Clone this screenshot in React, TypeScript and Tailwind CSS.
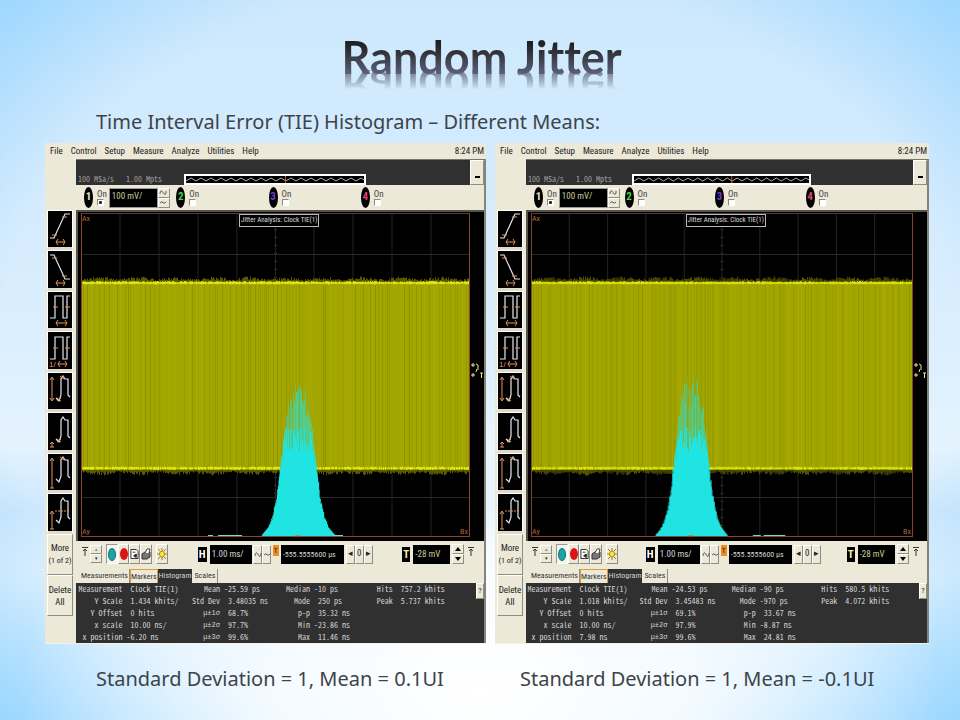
import React from "react";

interface Scope {
  name: string;
  center: number;
  seed: number;
  peak: number;
  caption: string;
  rows: [string, string, string, string, string, string, string, string][];
  specks: [number, number][];
}

const scopes: Scope[] = [
  {
    name: "left",
    center: 217,
    seed: 7,
    peak: 156,
    caption: "Standard Deviation = 1, Mean = 0.1UI",
    rows: [
      ["Measurement", " Clock TIE(1)", "Mean", "-25.59 ps", "Median", "-10 ps", "Hits", " 757.2 khits"],
      ["Y Scale", " 1.434 khits/", "Std Dev", " 3.48035 ns", "Mode", " 250 ps", "Peak", " 5.737 khits"],
      ["Y Offset", " 0 hits", "μ±1σ", " 68.7%", "p-p", " 35.32 ns", "", ""],
      ["x scale", " 10.00 ns/", "μ±2σ", " 97.7%", "Min", "-23.86 ns", "", ""],
      ["x position", "-6.20 ns", "μ±3σ", " 99.6%", "Max", " 11.46 ns", "", ""],
    ],
    specks: [[127, 5], [137, 24], [252, 10]],
  },
  {
    name: "right",
    center: 163,
    seed: 23,
    peak: 162,
    caption: "Standard Deviation = 1, Mean = -0.1UI",
    rows: [
      ["Measurement", " Clock TIE(1)", "Mean", "-24.53 ps", "Median", "-90 ps", "Hits", " 580.5 khits"],
      ["Y Scale", " 1.018 khits/", "Std Dev", " 3.45483 ns", "Mode", "-970 ps", "Peak", " 4.072 khits"],
      ["Y Offset", " 0 hits", "μ±1σ", " 69.1%", "p-p", " 33.67 ns", "", ""],
      ["x scale", " 10.00 ns/", "μ±2σ", " 97.9%", "Min", "-8.87 ns", "", ""],
      ["x position", " 7.98 ns", "μ±3σ", " 99.6%", "Max", " 24.81 ns", "", ""],
    ],
    specks: [[226, 8], [237, 22]],
  },
];

const envelope: Array<[number, number]> = [
  [0, 1], [5, 0.98], [8, 0.93], [11, 0.84], [14, 0.68], [18, 0.46], [22, 0.25], [26, 0.13], [30, 0.06], [36, 0.01],
];

function envelopeAt(d: number) {
  for (let i = 1; i < envelope.length; i++) {
    const [x0, y0] = envelope[i - 1];
    const [x1, y1] = envelope[i];
    if (d <= x1) return y0 + ((y1 - y0) * (d - x0)) / (x1 - x0);
  }
  return 0;
}

function random(seed: number) {
  let s = seed * 9301 + 49297;
  return () => {
    s = (s * 1103515245 + 12345) % 2147483648;
    return s / 2147483648;
  };
}

function Plot({ scope }: { scope: Scope }) {
  const next = random(scope.seed);
  const W = 389;
  const H = 324;
  let fuzz = "";
  let bright = "";
  for (let x = 0; x < W; x++) {
    const swell = 2 + 2 * Math.abs(Math.sin(x / 12));
    fuzz += `M${x + 0.5} ${70 - 1 - swell * (0.4 + next())}V70M${x + 0.5} 256V${257 + swell * (0.4 + next())}`;
    if (next() > 0.25) bright += `M${x + 0.5} ${69 - next()}V${70.5 + next()}M${x + 0.5} ${253.5 + next()}V${256 + next()}`;
  }
  const stripes: React.ReactNode[] = [];
  for (let x = 2; x < W; x += 2 + Math.floor(next() * 4)) {
    stripes.push(
      <path key={x} d={`M${x + 0.5} 72V254`} stroke={next() > 0.3 ? "#6e7000" : "#b9bb0a"} strokeOpacity={0.08 + next() * 0.28} />
    );
  }
  let core = "";
  const veil: React.ReactNode[] = [];
  for (let i = -37; i <= 37; i++) {
    const top = scope.peak * envelopeAt(Math.abs(i));
    const solid = Math.min(top * (0.82 + next() * 0.16), 84 + next() * 26);
    const x = scope.center + i + 0.5;
    core += `M${x} ${H - 1}V${H - 1 - solid}`;
    if (top > solid) {
      veil.push(
        <path key={i} d={`M${x} ${H - 1 - solid}V${H - 1 - solid - (top - solid) * (0.55 + next() * 0.5)}`} stroke="#35dcc0" strokeOpacity={0.35 + next() * 0.55} />
      );
    }
  }
  return (
    <svg className="block size-full" viewBox={`0 0 ${W} ${H}`} preserveAspectRatio="none" fill="none" aria-hidden="true">
      {[39, 78, 117, 156, 233, 272, 311, 350].map((x) => (
        <path key={x} d={`M${x} 0V${H}`} stroke="#232323" />
      ))}
      <path d="M0 41.5H389M0 284.5H389" stroke="#292929" />
      <path d={`M194.5 0V${H}`} stroke="#333" strokeDasharray="1 7" strokeWidth="3" />
      <path d="M194.5 0V324" stroke="#222" />
      <path d="M0 .5H389" stroke="#4a4038" />
      <path d={fuzz} stroke="#555900" />
      <path d="M0 70H389V256H0Z" fill="#a3a500" />
      {stripes}
      <path d="M0 70H389M0 255.5H389" stroke="#c7cb08" strokeWidth="2" />
      <path d={bright} stroke="#e0e612" />
      <path d="M0 323.5H389M.5 0V324M388.5 0V324" stroke="#86452f" strokeWidth="1" />
      {veil}
      <path d={core} stroke="#20e4e2" strokeWidth="1.3" />
      {scope.specks.map(([x, w]) => (
        <path key={x} d={`M${x} 322.5h${w}`} stroke="#7fd8c4" />
      ))}
      <path d={`M${scope.center - 3} 322.5h5`} stroke="#c48b35" />
    </svg>
  );
}

const pulse = "M2 26H7V4H15V26H19V4H22";
const step = "M8 25L11 28L13 22V6L15 3L17 6H20V22L22 24";
const toolIcons: { label: string; white: string; orange: string; note?: string; dashed?: string }[] = [
  { label: "Rise time", white: "M2 27H6L17 3H22", orange: "M4 24h5M14 6h5M8 31h9M10 28l-2 3 2 3M15 28l2 3-2 3" },
  { label: "Fall time", white: "M2 3H6L17 27H22", orange: "M4 6h5M14 24h5M8 31h9M10 28l-2 3 2 3M15 28l2 3-2 3" },
  { label: "Period", white: pulse, orange: "M5 15h5M17 15h5M8 31h11M10 28l-2 3 2 3M17 28l2 3-2 3" },
  { label: "Frequency", white: pulse, orange: "M5 15h5M17 15h5M10 31h9M12 28l-2 3 2 3M17 28l2 3-2 3", note: "1/" },
  { label: "V peak-peak", white: step, orange: "M4 5V27M2 7l2-3 2 3M2 25l2 3 2-3M12 3l4 3M12 6l4-3M9 25l4 3M9 28l4-3" },
  { label: "V minimum", white: step, orange: "M4 28V33M2 30l2-2 2 2M2 33h4M9 25l4 3M9 28l4-3" },
  { label: "V maximum", white: step, orange: "M4 5V34M2 7l2-3 2 3M2 34h4M12 3l4 3M12 6l4-3" },
  { label: "V average", white: step, orange: "M4 17V34M2 19l2-3 2 3M2 34h4", dashed: "M7 16H22" },
];

const bevel = "border border-t-white border-l-white border-r-[#8f8c80] border-b-[#8f8c80] bg-[#ece9d8]";
const narrow = "font-['Liberation_Sans_Narrow','Roboto_Condensed','Noto_Sans_CJK_SC',sans-serif]";

function Sidebar() {
  return (
    <aside className="flex w-[31px] shrink-0 flex-col pt-[51px] pl-[2px] pr-[3px]">
      {toolIcons.map((t, i) => (
        <button key={t.label} aria-label={t.label} className={`${i % 2 ? "h-[41px]" : "h-[40px]"} border-t border-r border-l border-white border-b-3 border-b-[#dedbca] bg-black`}>
          <svg className="block h-[36px] w-[24px]" viewBox="0 0 24 36" fill="none" aria-hidden="true">
            <path d={t.white} stroke="#e4e8ee" strokeWidth="1.2" />
            <path d={t.orange} stroke="#e8935a" />
            {t.dashed && <path d={t.dashed} stroke="#e8935a" strokeDasharray="2 1" />}
            {t.note && <text x="1" y="34" fontSize="8" fontFamily="Liberation Sans" fill="#e8935a">{t.note}</text>}
          </svg>
        </button>
      ))}
      <button className={`${bevel} h-[41px] text-[9px] leading-[12px] text-[#222]`}>More<br /><span className="whitespace-nowrap text-[8px]">(1 of 2)</span></button>
      <button className={`${bevel} h-[41px] text-[9px] leading-[12px] text-[#222]`}>Delete<br />All</button>
    </aside>
  );
}

const channels = [
  { n: "1", color: "text-[#e8e8c0]" },
  { n: "2", color: "text-[#49d34e]" },
  { n: "3", color: "text-[#6b3fd0]" },
  { n: "4", color: "text-[#e0407c]" },
];

function Wave({ soft = false }: { soft?: boolean }) {
  return (
    <svg className="block h-[7px] w-[8px]" viewBox="0 0 8 7" fill="none" stroke="#555" aria-hidden="true">
      <path d={soft ? "M1 4Q2.500 2 4 3.500T7 3" : "M1 5V4Q2 0 4 3.500T7 4V2"} />
    </svg>
  );
}

function Trigger() {
  return (
    <svg className="mb-1 block h-[10px] w-[6px]" viewBox="0 0 6 10" fill="none" stroke="#333" aria-hidden="true">
      <path d="M0 .5H6M3 9V2M1 4L3 2L5 4" />
    </svg>
  );
}

function ScopePanel({ scope }: { scope: Scope }) {
  return (
    <section className={`${narrow} flex flex-col bg-[#ece9d8] text-[#222]`} aria-label={`${scope.name} oscilloscope`}>
      <nav className="flex h-4 items-center gap-2 pr-[2px] pl-[5px] text-[9px] leading-4 text-[#222]">
        {["File", "Control", "Setup", "Measure", "Analyze", "Utilities", "Help"].map((m) => (
          <button key={m}>{m}</button>
        ))}
        <time className="ml-auto">8:24 PM</time>
      </nav>
      <div className="flex">
        <Sidebar />
        <div className="flex min-w-0 flex-1 flex-col border-t border-r-2 border-t-[#77756c] border-r-[#85837a]">
          <div className="flex h-[25px] bg-[#303030]">
            <div className="grid flex-1 grid-cols-[108fr_182fr_104fr] items-end">
              <p className="mb-[1px] whitespace-pre pl-[2px] font-['Noto_Sans_Mono_CJK_SC','Liberation_Mono',monospace] text-[8px] leading-[10px] text-[#a2a2a2]">100 MSa/s   1.00 Mpts</p>
              <div className="h-[11px] border-2 border-white bg-black">
                <svg className="block h-[7px] w-full" viewBox="0 0 178 7" preserveAspectRatio="none" fill="none" aria-hidden="true">
                  <path d={"M0 5" + Array.from({ length: 18 }, () => "l5 -3l5 3").join("")} stroke="#b0b0b0" />
                  <path d="M99.500 0V7" stroke="#c9572c" />
                </svg>
              </div>
            </div>
            <button aria-label="Minimize" className={`${bevel} flex w-[14px] items-center justify-center pt-2`}><span className="h-[2px] w-[5px] bg-black" /></button>
          </div>
          <div className="grid h-[25px] grid-cols-4 bg-[#ece9d8] pr-[31px] pl-2">
            {channels.map((c, i) => (
              <div key={c.n} className="flex items-center gap-1">
                <span className={`${c.color} flex h-[21px] w-[9px] items-center justify-center rounded-[50%] bg-black text-[11px] font-bold`}>{c.n}</span>
                <label className="flex flex-col text-[9px] leading-[10px] text-[#444]">
                  On
                  <input type="checkbox" defaultChecked={i === 0} className="size-[7px] appearance-none border border-t-[#888] border-l-[#888] border-r-white border-b-white bg-white checked:bg-[radial-gradient(circle,#222_35%,#fff_50%)]" />
                </label>
                {i === 0 && (
                  <div className="-ml-[2px] flex">
                    <input aria-label="Vertical scale" readOnly value="100 mV/" className="h-5 w-[49px] border border-[#999] bg-black pl-[2px] pb-1 text-[9px] text-[#c9cc9a]" />
                    <span className="flex flex-col">
                      <button aria-label="Increase scale" className={`${bevel} h-[10px] w-[12px]`}><Wave /></button>
                      <button aria-label="Decrease scale" className={`${bevel} h-[10px] w-[12px]`}><Wave soft /></button>
                    </span>
                  </div>
                )}
              </div>
            ))}
          </div>
          <div className="relative flex h-[331px] border-t-2 border-l-2 border-[#55534c] bg-black pt-[1px] pb-1 pl-[3px] pr-[14px]">
            <Plot scope={scope} />
            <span className="absolute top-[2px] left-1/2 -translate-x-[42px] border border-[#bbb] bg-black px-[1px] text-[7px] leading-[11px] whitespace-nowrap text-[#ddd]">Jitter Analysis: Clock TIE(1)</span>
            <span className="absolute top-[2px] left-1 text-[8px] leading-[10px] text-[#b2603f]">Ax</span>
            <span className="absolute bottom-1 left-1 text-[8px] leading-[10px] text-[#b2603f]">Ay</span>
            <span className="absolute right-[16px] bottom-1 text-[8px] leading-[10px] text-[#b2603f]">Bx</span>
            <svg className="absolute top-[149px] right-[1px] h-[18px] w-[12px]" viewBox="0 0 12 18" fill="none" aria-hidden="true">
              <path d="M0 4h4M2 2v4M0 14h4M2 12v4M5 3l2 1M7 4v5M6 8l-1 3M9 12h3M10.500 12v5" stroke="#e6e68c" />
            </svg>
          </div>
          <div className="grid h-[26px] grid-cols-[116fr_205fr_82fr] items-center bg-[#ece9d8] pl-[6px]">
            <div className="flex items-center">
              <Trigger />
              <span className="mr-1 ml-[2px] flex flex-col">
                <button aria-label="Marker up" className={`${bevel} h-[9px] w-[12px] text-[5px] leading-[7px] text-[#888]`}>▴</button>
                <button aria-label="Marker down" className={`${bevel} h-[9px] w-[12px] text-[5px] leading-[7px]`}>▾</button>
              </span>
              <button aria-label="Run" className="flex h-5 w-[12px] items-center justify-center border border-t-[#999] border-l-[#999] border-r-white border-b-white bg-[#f6f4ea]"><span className="h-[13px] w-[8px] rounded-[50%] border border-[#0a7474] bg-[#1fa5a5]" /></button>
              <button aria-label="Stop" className={`${bevel} flex h-5 w-[11px] items-center justify-center`}><span className="h-[12px] w-[8px] shrink-0 rounded-[50%] bg-[#dd1414]" /></button>
              <button aria-label="Save" className={`${bevel} h-5 w-[11px]`}>
                <svg viewBox="0 0 10 18" fill="none" className="block h-[18px] w-[9px]" aria-hidden="true"><path d="M1 4H7L9 6V14H1Z" fill="#fff" stroke="#222" /><path d="M3 7h3M4 11l3-2v4z" fill="#222" stroke="#222" /></svg>
              </button>
              <button aria-label="Print" className={`${bevel} h-5 w-[12px]`}>
                <svg viewBox="0 0 10 18" fill="none" className="block h-[18px] w-[10px]" aria-hidden="true"><path d="M1 9L4 7H9V12L6 14H1Z" fill="#777" stroke="#333" /><path d="M4 8L6 4H9L8 8" fill="#fff" stroke="#444" /></svg>
              </button>
              <button aria-label="Brightness" className={`${bevel} ml-1 h-5 w-[12px]`}>
                <svg viewBox="0 0 10 18" fill="none" className="block h-[18px] w-[10px]" aria-hidden="true"><path d="M5 3V6M5 12V15M0 9H2M8 9H10M1 4L3 6M9 4L7 6M1 14L3 12M9 14L7 12" stroke="#9a8420" /><ellipse cx="5" cy="9" rx="2.500" ry="3" fill="#ffe83a" stroke="#a58a1d" /></svg>
              </button>
            </div>
            <div className="flex items-center">
              <span className="mr-[3px] h-[15px] w-[9px] bg-black text-center text-[11px] leading-[15px] font-bold text-white">H</span>
              <input aria-label="Time per division" readOnly value="1.00 ms/" className="mr-[1px] h-[19px] w-[42px] bg-black pl-[2px] text-[9px] text-[#d5d5d5]" />
              <button aria-label="Zoom in time" className={`${bevel} h-[19px] w-[9px]`}><Wave /></button>
              <button aria-label="Zoom out time" className={`${bevel} h-[19px] w-[9px]`}><Wave soft /></button>
              <span className="mr-[2px] mb-2 ml-[2px] h-[11px] w-[6px] bg-[#f08a24] text-center text-[8px] leading-[11px]">T</span>
              <input aria-label="Horizontal position" readOnly value="-555.5555600 μs" className="mr-[2px] h-[19px] w-[63px] bg-black pl-[2px] text-[8px] text-[#d5d5d5]" />
              {["◂", "0", "▸"].map((t) => (
                <button key={t} aria-label={t === "0" ? "Zero position" : t === "◂" ? "Move left" : "Move right"} className={`${bevel} h-[19px] w-[9px] text-[9px]`}>{t}</button>
              ))}
            </div>
            <div className="flex items-center">
              <span className="mr-[3px] h-[15px] w-[8px] bg-black text-center text-[11px] leading-[15px] font-bold text-[#f0f0a0]">T</span>
              <input aria-label="Trigger level" readOnly value="-28 mV" className="mr-[2px] h-[19px] w-[37px] bg-black pl-[2px] text-[9px] text-[#c9cc9a]" />
              <span className="mr-1 flex flex-col">
                <button aria-label="Trigger up" className={`${bevel} flex h-[10px] w-[12px] items-center justify-center`}><span className="border-x-3 border-b-4 border-x-transparent border-b-black" /></button>
                <button aria-label="Trigger down" className={`${bevel} flex h-[10px] w-[12px] items-center justify-center`}><span className="border-x-3 border-t-4 border-x-transparent border-t-black" /></button>
              </span>
              <Trigger />
            </div>
          </div>
          <div className="flex h-[16px] items-end pl-[5px] text-[8px] leading-[14px] text-[#333]" role="tablist">
            <button role="tab" className="border-r border-[#8f8c80] pr-[1px]">Measurements</button>
            <button role="tab" className="border border-b-0 border-[#e39a35] leading-[13px]">Markers</button>
            <button role="tab" aria-selected="true" className="bg-[#303030] px-[1px] text-[#d0d0d0]">Histogram</button>
            <button role="tab" className="border-r border-[#8f8c80] px-[2px]">Scales</button>
          </div>
          <div className="flex bg-[#303030]">
            <table className="w-full table-fixed border-collapse font-['Noto_Sans_Mono_CJK_SC','Liberation_Mono',monospace] text-[8px] leading-[12px] text-[#d4d4d4]">
              <colgroup>
                <col className="w-[11.600%]" /><col className="w-[13.300%]" /><col className="w-[11.100%]" /><col className="w-[12.900%]" />
                <col className="w-[9.600%]" /><col className="w-[14.400%]" /><col className="w-[6.300%]" /><col />
              </colgroup>
              <tbody>
                {scope.rows.map((r) => (
                  <tr key={r[0]}>
                    {r.map((cell, i) => i % 2 === 0 ? (
                      <th key={i} scope="row" className={cell.startsWith("μ") ? "p-0 text-right font-['Liberation_Mono',monospace] text-[7px] font-normal whitespace-nowrap" : "p-0 text-right font-normal whitespace-nowrap"}>{cell}</th>
                    ) : (
                      <td key={i} className="h-[12px] p-0 pl-1 whitespace-pre">{cell}</td>
                    ))}
                  </tr>
                ))}
              </tbody>
            </table>
            <button aria-label="Help" className={`${bevel} h-4 w-2 shrink-0 text-[8px]`}>?</button>
          </div>
        </div>
      </div>
      <div className="h-[1px] bg-[#f5f3e9]" />
    </section>
  );
}

export default function App() {
  return (
    <main className="min-h-screen bg-[radial-gradient(ellipse_48%_42%_at_50%_96%,#ffffff_0%,#ffffffcc_45%,#ffffff00_100%),radial-gradient(ellipse_72%_76%_at_50%_50%,#ffffff00_70%,#86ceff_108%),linear-gradient(#cde8fd_0%,#d8edfe_40%,#e4f3fe_62%,#cbe7fd_71%,#e2f2fe_80%,#cfebff_92%,#c6e8ff_100%)] pr-[31px] pl-[45px] text-[#3d4349]">
      <header className="flex h-[143px] flex-col pt-[29px]">
        <h1 className="mr-[11px] text-center">
          <span className="inline-block bg-linear-to-b from-[#202020] from-25% to-[#5c6078] to-80% bg-clip-text font-['Lato','Open_Sans',sans-serif] text-[45px] leading-[56px] font-bold [font-variant-ligatures:none] text-transparent [-webkit-box-reflect:below_-26px_linear-gradient(transparent_46%,#ffffffbb_78%)]">Random Jitter</span>
        </h1>
        <p className="mt-[23px] ml-[51px] font-['Noto_Sans',sans-serif] text-[20px] leading-[28px]">Time Interval Error (TIE) Histogram – Different Means:</p>
      </header>
      <div className="grid grid-cols-[441fr_434fr] gap-[9px]">
        {scopes.map((s) => (
          <ScopePanel key={s.name} scope={s} />
        ))}
      </div>
      <footer className="grid grid-cols-[424fr_409fr] pt-[21px] pl-[51px] font-['Noto_Sans',sans-serif] text-[20px] leading-[28px] whitespace-nowrap">
        {scopes.map((s) => (
          <p key={s.name}>{s.caption}</p>
        ))}
      </footer>
    </main>
  );
}
